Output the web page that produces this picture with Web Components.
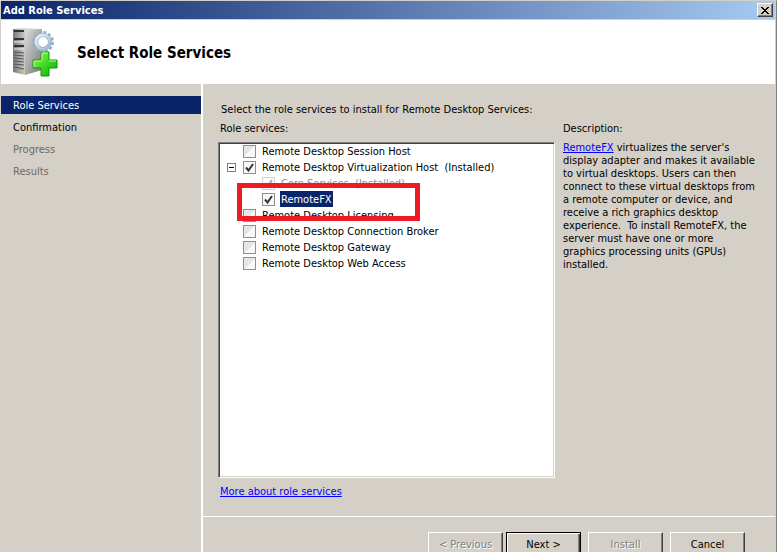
<!DOCTYPE html>
<html lang="en">
<head>
<meta charset="utf-8">
<title>Add Role Services</title>
<style>
    body {
        margin: 0;
        overflow: hidden;
        font-family: "DejaVu Sans Condensed", "DejaVu Sans", sans-serif;
        font-size: 11px;
        line-height: 16px;
        color: #000;
        --face: #d4d0c8;
        --navy: #0a246a;
    }
</style>
</head>
<body>
<wizard-window caption="Add Role Services">
    <wizard-header slot="header">Select Role Services</wizard-header>
    <wizard-steps slot="steps"></wizard-steps>
    <role-page>
        <role-item>Remote Desktop Session Host</role-item>
        <role-item expandable checked>Remote Desktop Virtualization Host&nbsp; (Installed)</role-item>
        <role-item child checked disabled>Core Services&nbsp; (Installed)</role-item>
        <role-item child checked selected>RemoteFX</role-item>
        <role-item>Remote Desktop Licensing</role-item>
        <role-item>Remote Desktop Connection Broker</role-item>
        <role-item>Remote Desktop Gateway</role-item>
        <role-item>Remote Desktop Web Access</role-item>
    </role-page>
    <wizard-buttons slot="footer"></wizard-buttons>
</wizard-window>

<script>
function define(name, render) {
    customElements.define(name, class extends HTMLElement {
        constructor() {
            super();
            this.attachShadow({ mode: 'open' });
        }

        connectedCallback() {
            this.shadowRoot.innerHTML = render(this);
        }
    });
}

define('wizard-window', el => `
    <style>
        :host {
            display: flex;
            flex-direction: column;
            box-sizing: border-box;
            height: 100vh;
            overflow: hidden;
            background: var(--face);
            border: solid var(--face);
            border-width: 1px 0 0 1px;
            border-right: 1px solid #808080;
        }
        .caption {
            display: flex;
            flex: none;
            align-items: center;
            justify-content: space-between;
            height: 18px;
            margin: 0 1px 1px 0;
            padding: 0 2px;
            background: linear-gradient(to right, #0a246a, #a6caf0);
            color: #fff;
            font-weight: bold;
        }
        .caption span { padding-top: 2px; }
        .close {
            display: flex;
            align-items: center;
            justify-content: center;
            width: 16px;
            height: 14px;
            padding: 0;
            background: var(--face);
            border: 1px solid;
            border-color: #fff #404040 #404040 #fff;
            box-shadow: inset -1px -1px #808080;
        }
        .body {
            display: flex;
            flex: 1;
            min-height: 0;
        }
        .side {
            flex: none;
            width: 200px;
            border-right: 2px solid #fff;
        }
        .main {
            display: flex;
            flex: 1;
            flex-direction: column;
            min-width: 0;
        }
    </style>
    <div class="caption">
        <span>${el.getAttribute('caption')}</span>
        <button class="close" aria-label="Close">
            <svg width="8" height="7" viewBox="0 0 8 7" shape-rendering="crispEdges"><path d="M0 0h2v1h1v1h2V1h1V0h2v1H7v1H6v1H5v1h1v1h1v1h1v1H6V6H5V5H3v1H2v1H0V6h1V5h1V4h1V3H2V2H1V1H0z"/></svg>
        </button>
    </div>
    <slot name="header"></slot>
    <div class="body">
        <div class="side"><slot name="steps"></slot></div>
        <div class="main"><slot></slot><slot name="footer"></slot></div>
    </div>
`);

define('wizard-header', () => `
    <style>
        :host {
            display: flex;
            flex: none;
            align-items: center;
            gap: 18px;
            height: 64px;
            margin-right: 1px;
            padding-left: 10px;
            background: #fff;
        }
        h1 {
            margin: 0;
            padding-top: 2px;
            font-size: 15px;
            line-height: 20px;
        }
    </style>
    <svg width="48" height="52" viewBox="0 0 48 52" aria-hidden="true">
        <defs>
            <linearGradient id="front" x1="0" x2="1"><stop offset="0" stop-color="#777"/><stop offset="1" stop-color="#ccc"/></linearGradient>
            <linearGradient id="flank" x1="0" y1="0" x2="1" y2="1"><stop offset="0" stop-color="#ddd"/><stop offset="1" stop-color="#747474"/></linearGradient>
            <linearGradient id="gear" x1="0" x2="1" y2="1"><stop offset="0" stop-color="#edf5fb"/><stop offset="1" stop-color="#9db4ca"/></linearGradient>
            <linearGradient id="plus" x1="0" x2="1" y2="1"><stop offset="0" stop-color="#9cf45e"/><stop offset=".5" stop-color="#3fda24"/><stop offset="1" stop-color="#0da80b"/></linearGradient>
        </defs>
        <path d="M2 3l9-1 20 1-17 2z" fill="#d6d6d6"/>
        <path d="M14 4l17-1v41l-17 5z" fill="url(#flank)"/>
        <path d="M2 3l12 1v45L2 46z" fill="url(#front)"/>
        <path d="M3 5h10M3 13h10M3 20h10" stroke="#333" stroke-width="2"/>
        <path d="M3 16h10M3 23h10" stroke="#eee"/>
        <path d="M3 26l10 1M3 29l10 1M3 32l10 1M3 35l10 1M3 38l10 1M3 41l10 2" stroke="#555"/>
        <path d="M11 45h2v2h-2z" fill="#6f2"/>
        <circle cx="32" cy="16" r="6" fill="#fff"/>
        <circle cx="32" cy="16" r="9.5" fill="none" stroke="#9bb0c6" stroke-width="3" stroke-dasharray="3 1.97"/>
        <circle cx="32" cy="16" r="7" fill="none" stroke="#8ba5be" stroke-width="4"/>
        <circle cx="32" cy="16" r="7" fill="none" stroke="url(#gear)" stroke-width="3"/>
        <path d="M30 26h8v8h8v8h-8v8h-8v-8h-8v-8h8z" fill="url(#plus)" stroke="#159510"/>
        <path d="M31 34V27h6M23 41v-6h8M38 35h7" fill="none" stroke="#b8fa80"/>
    </svg>
    <h1><slot></slot></h1>
`);

define('wizard-steps', () => `
    <style>
        :host {
            display: block;
            padding-top: 12px;
        }
        ol {
            display: flex;
            flex-direction: column;
            gap: 4px;
            margin: 0;
            padding: 0;
            list-style: none;
        }
        li { padding: 2px 0 0 12px; }
        .current { background: var(--navy); color: #fff; }
        .pending { color: #6c6a66; }
    </style>
    <ol>
        <li class="current" aria-current="step">Role Services</li>
        <li>Confirmation</li>
        <li class="pending">Progress</li>
        <li class="pending">Results</li>
    </ol>
`);

define('role-item', el => {
    const on = name => el.hasAttribute(name);
    return `
    <style>
        :host {
            display: flex;
            align-items: center;
            height: 16px;
            padding-left: 8px;
            white-space: nowrap;
        }
        :host([child]) { padding-left: 27px; }
        .expander {
            display: flex;
            box-sizing: border-box;
            width: 9px;
            height: 9px;
            margin-right: 7px;
            padding: 0;
            background: #fff;
            border: 1px solid #808080;
        }
        .expander.none { visibility: hidden; }
        input {
            appearance: none;
            box-sizing: border-box;
            width: 13px;
            height: 13px;
            margin: 0 5px 0 0;
            border: 1px solid #8e8f8f;
            background: linear-gradient(135deg, #e6e6e6 50%, #f8f8f8 50%);
        }
        input:checked { background: #f8f8f8; }
        .box {
            position: relative;
            display: flex;
        }
        .tick {
            position: absolute;
            left: 2px;
            top: 2px;
            pointer-events: none;
        }
        label {
            padding: 2px 1px 0;
            line-height: 14px;
        }
        :host([disabled]) { color: #8a8a8a; }
        :host([disabled]) .box { opacity: 0.4; }
        :host([selected]) label { background: var(--navy); color: #fff; }
    </style>
    ${on('expandable')
        ? '<button class="expander" aria-label="Collapse"><svg width="7" height="7" shape-rendering="crispEdges"><path d="M1 3h5v1H1z"/></svg></button>'
        : '<span class="expander none"></span>'}
    <span class="box">
        <input type="checkbox" id="check" ${on('checked') ? 'checked' : ''} ${on('disabled') ? 'disabled' : ''}>
        ${on('checked') ? '<svg class="tick" width="9" height="9" viewBox="0 0 9 9"><path d="M1 4.5L3.5 7.5 8 1" fill="none" stroke="#333" stroke-width="2"/></svg>' : ''}
    </span>
    <label for="check"><slot></slot></label>
`;
});

define('role-page', () => `
    <style>
        :host {
            display: flex;
            flex: 1;
            flex-direction: column;
            min-height: 0;
            padding: 18px 14px 16px 15px;
        }
        p { margin: 0; }
        .intro { padding-left: 3px; }
        .columns {
            display: flex;
            flex: 1;
            gap: 8px;
            min-height: 0;
            margin-top: 3px;
        }
        .roles {
            display: flex;
            flex: 337;
            flex-direction: column;
            min-width: 0;
        }
        .roles > p, .more { padding-left: 2px; }
        .tree {
            position: relative;
            flex: 1;
            margin: 5px 0 6px;
            background: #fff;
            border: 1px solid;
            border-color: #808080 #fff #fff #808080;
            box-shadow: inset 1px 1px #404040, inset -1px -1px var(--face);
        }
        /* highlight frame over the selected role */
        .mark {
            position: absolute;
            left: 18px;
            top: 40px;
            box-sizing: border-box;
            width: 183px;
            height: 38px;
            border: 5px solid #ed1c24;
            pointer-events: none;
        }
        .description {
            flex: 199;
            min-width: 0;
        }
        .description p + p {
            margin-top: 4px;
            line-height: 13px;
        }
        a { color: #00f; }
    </style>
    <p class="intro">Select the role services to install for Remote Desktop Services:</p>
    <div class="columns">
        <div class="roles">
            <p>Role services:</p>
            <div class="tree">
                <slot></slot>
                <div class="mark"></div>
            </div>
            <div class="more"><a href="#">More about role services</a></div>
        </div>
        <div class="description">
            <p>Description:</p>
            <p><a href="#">RemoteFX</a> virtualizes the server's<br>display adapter and makes it available<br>to virtual desktops. Users can then<br>connect to these virtual desktops from<br>a remote computer or device, and<br>receive a rich graphics desktop<br>experience.&nbsp; To install RemoteFX, the<br>server must have one or more<br>graphics processing units (GPUs)<br>installed.</p>
        </div>
    </div>
`);

define('wizard-buttons', () => `
    <style>
        :host {
            display: flex;
            flex: none;
            justify-content: flex-end;
            align-items: flex-start;
            gap: 7px;
            box-sizing: border-box;
            height: 36px;
            margin-right: 1px;
            padding: 15px 30px 0 0;
            border-top: 1px solid #fff;
        }
        .pair {
            display: flex;
            gap: 3px;
        }
        button {
            box-sizing: border-box;
            width: 75px;
            height: 24px;
            padding: 2px 0 0;
            background: var(--face);
            border: 1px solid;
            border-color: #fff #404040 #404040 #fff;
            box-shadow: inset -1px -1px #808080;
            font: inherit;
            color: #000;
        }
        button:disabled {
            color: #808080;
            text-shadow: 1px 1px #fff;
        }
        .default {
            border-color: #000;
            box-shadow: inset 1px 1px #fff, inset -1px -1px #404040, inset -2px -2px #808080;
        }
    </style>
    <div class="pair">
        <button disabled>&lt; Previous</button>
        <button class="default">Next &gt;</button>
    </div>
    <button disabled>Install</button>
    <button>Cancel</button>
`);
</script>
</body>
</html>
